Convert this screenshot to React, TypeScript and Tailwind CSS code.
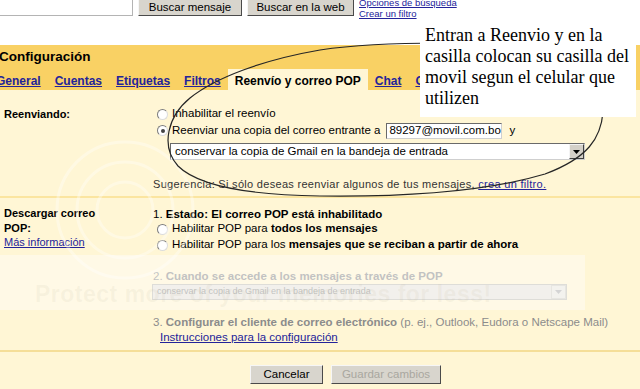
import React from 'react'

const link = 'text-[#23239a] underline'

function Radio({ checked = false }: { checked?: boolean }) {
  return (
    <span className="flex items-center justify-center w-[11px] h-[11px] rounded-full border border-[#7c7c7c] border-r-[#dcdcdc] border-b-[#dcdcdc] bg-white shrink-0">
      {checked && <span className="w-[4px] h-[4px] rounded-full bg-[#444]" />}
    </span>
  )
}

function WinButton({
  children,
  disabled = false,
  className = '',
}: {
  children: React.ReactNode
  disabled?: boolean
  className?: string
}) {
  return (
    <button
      className={`flex items-center justify-center bg-[#d8d5cd] border border-t-[#f6f6f6] border-l-[#f6f6f6] border-r-[#4a4a4a] border-b-[#4a4a4a] text-[11.5px] leading-none ${
        disabled ? 'text-[#a9a79f]' : 'text-black'
      } ${className}`}
    >
      {children}
    </button>
  )
}

function Select({ text, disabled = false, className = '' }: { text: string; disabled?: boolean; className?: string }) {
  return (
    <div
      className={`flex items-stretch border ${
        disabled ? 'border-[#c8c6be] bg-[#e9e7df] text-[#9a9a9a] text-[9px]' : 'border-[#6a6a6a] border-r-[#cfcfcf] border-b-[#cfcfcf] bg-white text-[11.5px]'
      } ${className}`}
    >
      <span className="flex-1 pl-[4px] flex items-center whitespace-nowrap overflow-hidden">{text}</span>
      <span
        className={`w-[15px] flex items-center justify-center border ${
          disabled ? 'bg-[#eceae3] border-[#d8d6ce]' : 'bg-[#d4d0c8] border-t-[#f4f4f4] border-l-[#f4f4f4] border-r-[#404040] border-b-[#404040]'
        }`}
      >
        <svg width="7" height="4" viewBox="0 0 7 4">
          <path d="M0 0h7L3.5 4z" fill={disabled ? '#b8b8b8' : '#000'} />
        </svg>
      </span>
    </div>
  )
}

export default function App() {
  const tabs = ['General', 'Cuentas', 'Etiquetas', 'Filtros', 'Reenvío y correo POP', 'Chat', 'Cl']

  return (
    <div className="relative w-[640px] h-[389px] overflow-hidden bg-white text-black font-['Liberation_Sans',Arial,sans-serif]">
      {/* search bar */}
      <div className="flex items-start h-[45px]">
        <div className="w-[133px] h-[16px] bg-white border-r border-b border-[#b4b4b4]" />
        <WinButton className="ml-[5px] w-[104px] h-[17px] -mt-px">Buscar mensaje</WinButton>
        <WinButton className="ml-[5px] w-[107px] h-[17px] -mt-px">Buscar en la web</WinButton>
        <div className="ml-[5px] -mt-[3px] flex flex-col text-[9.5px] leading-[11px]">
          <a className={link}>Opciones de búsqueda</a>
          <a className={link}>Crear un filtro</a>
        </div>
      </div>

      {/* header */}
      <div className="bg-[#f9d164] h-[45px] flex flex-col">
        <div className="h-[24px] flex items-center -ml-[1px] text-[13.5px] font-bold">Configuración</div>
        <div className="flex h-[21px] -ml-[11px] text-[12px] font-bold leading-[14px] whitespace-nowrap">
          {tabs.map((t) => (
            <span
              key={t}
              className={`px-[7px] pt-[5px] ${t === 'Reenvío y correo POP' ? 'bg-[#fff6d5] text-black' : link}`}
            >
              {t}
            </span>
          ))}
        </div>
      </div>

      {/* content */}
      <div className="bg-[#fff6d5] h-[299px] flex flex-col">
        {/* reenviando */}
        <div className="grid grid-cols-[150px_1fr] h-[106px]">
          <div className="pt-[16px] pl-[4px] text-[11px] font-bold leading-[16px]">Reenviando:</div>
          <div className="pt-[16px] text-[11.5px] flex flex-col">
            <div className="h-[16px] flex items-center pl-[7px] gap-[4px]">
              <Radio />
              <span>Inhabilitar el reenvío</span>
            </div>
            <div className="h-[17px] flex items-center pl-[7px] gap-[4px] whitespace-nowrap">
              <Radio checked />
              <span>Reenviar una copia del correo entrante a</span>
              <span className="ml-[2px] w-[116px] h-[16px] flex items-center pl-[2px] bg-white border border-[#6a6a6a] border-r-[#d0d0d0] border-b-[#d0d0d0] text-[11.5px] overflow-hidden">
                89297@movil.com.bo
              </span>
              <span className="ml-[3px]">y</span>
            </div>
            <Select className="mt-[4px] ml-[20px] w-[415px] h-[17px]" text="conservar la copia de Gmail en la bandeja de entrada" />
            <div className="mt-[17px] h-[14px] ml-[3px] text-[11px] leading-[14px] text-[#333] tracking-[0.3px] whitespace-nowrap">
              Sugerencia: Si sólo deseas reenviar algunos de tus mensajes, <a className={link}>crea un filtro.</a>
            </div>
          </div>
        </div>

        <div className="h-[2px] bg-[#fbe5a0]" />

        {/* descargar POP */}
        <div className="grid grid-cols-[150px_1fr] h-[152px]">
          <div className="pt-[8px] pl-[4px] text-[11px] leading-[14.5px]">
            <div className="font-bold">Descargar correo</div>
            <div className="font-bold">POP:</div>
            <a className={link}>Más información</a>
          </div>
          <div className="pt-[9px] text-[11.5px] flex flex-col whitespace-nowrap">
            <div className="h-[14px] leading-[14px] ml-[3px]">
              1. <b>Estado: El correo POP está inhabilitado</b>
            </div>
            <div className="h-[16px] flex items-center pl-[7px] gap-[4px]">
              <Radio />
              <span>
                Habilitar POP para <b>todos los mensajes</b>
              </span>
            </div>
            <div className="h-[16px] flex items-center pl-[7px] gap-[4px]">
              <Radio />
              <span>
                Habilitar POP para los <b>mensajes que se reciban a partir de ahora</b>
              </span>
            </div>
            <div className="mt-[16px] h-[14px] leading-[14px] ml-[3px] text-[#9a9a9a]">
              2. <b>Cuando se accede a los mensajes a través de POP</b>
            </div>
            <Select disabled className="mt-[1px] ml-[2px] w-[415px] h-[16px]" text="conservar la copia de Gmail en la bandeja de entrada" />
            <div className="mt-[15px] h-[14px] leading-[14px] ml-[3px] text-[#8c8c8c]">
              3. <b>Configurar el cliente de correo electrónico</b> (p. ej., Outlook, Eudora o Netscape Mail)
            </div>
            <div className="mt-[1px] h-[14px] leading-[14px] ml-[10px]">
              <a className={link}>Instrucciones para la configuración</a>
            </div>
          </div>
        </div>

        <div className="h-[2px] bg-[#f5de98]" />

        {/* actions */}
        <div className="flex pt-[13px] pl-[250px] gap-[8px]">
          <WinButton className="w-[73px] h-[19px]">Cancelar</WinButton>
          <WinButton disabled className="w-[110px] h-[19px]">Guardar cambios</WinButton>
        </div>
      </div>

      {/* photobucket watermark */}
      <div className="absolute left-0 top-[255px] w-[585px] h-[55px] bg-white/40 pointer-events-none" />
      <div className="absolute left-[35px] top-[277px] text-[23px] font-bold tracking-[0.5px] text-[#b4aa86]/10 whitespace-nowrap pointer-events-none">
        Protect more of your memories for less!
      </div>

      {/* hand-drawn ellipse */}
      <svg className="absolute left-0 top-0 pointer-events-none" width="640" height="389" viewBox="0 0 640 389">
        <g fill="none" stroke="#ffffff" strokeOpacity="0.35" strokeWidth="3">
          <circle cx="125" cy="210" r="28" />
          <circle cx="125" cy="210" r="48" />
          <circle cx="125" cy="210" r="68" />
        </g>
        <path
          d="M603 112 C601 138 588 158 545 174 C485 192 400 197 320 196 C250 195 198 186 178 166 C160 146 168 116 190 98 C215 78 262 60 320 50 C360 44 400 43 440 43"
          fill="none"
          stroke="#262626"
          strokeWidth="1.2"
        />
      </svg>

      {/* annotation */}
      <div className="absolute left-[420px] top-[22px] w-[216px] h-[95px] bg-white pl-[5px] pt-[3px] font-['Liberation_Serif','Times_New_Roman',serif] text-[18px] leading-[21px] whitespace-nowrap">
        <div>Entran a Reenvio y en la</div>
        <div>casilla colocan su casilla del</div>
        <div>movil segun el celular que</div>
        <div>utilizen</div>
      </div>
    </div>
  )
}
